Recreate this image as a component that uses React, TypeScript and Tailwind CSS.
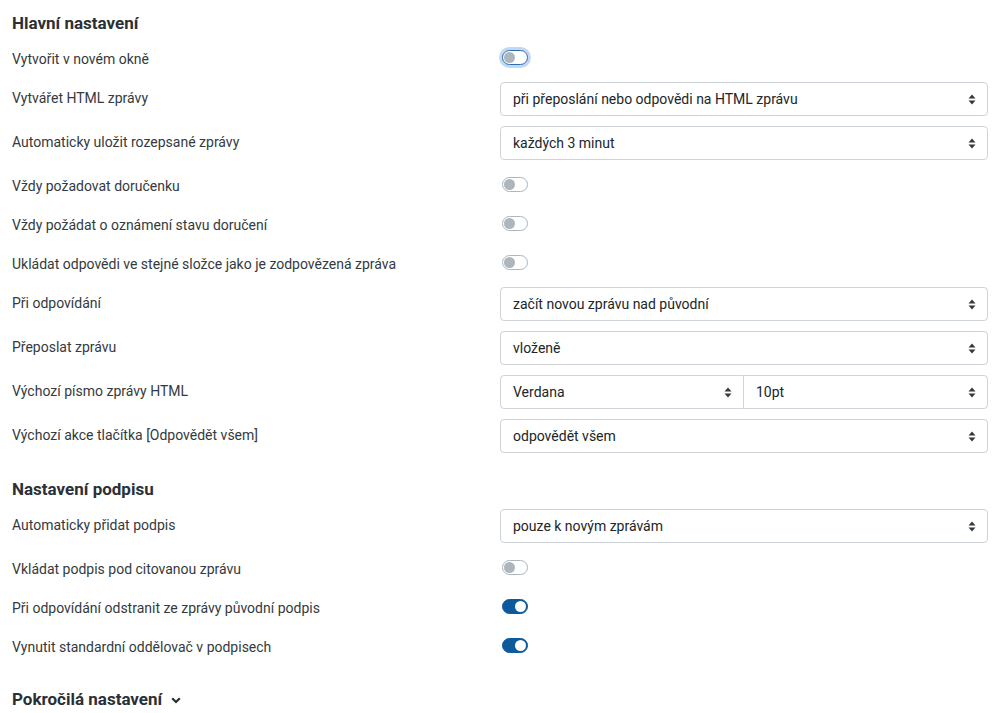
import React from "react";

const Arrows = () => (
  <svg width="8" height="11" viewBox="0 0 8 11" className="shrink-0">
    <path d="M4 0.5 L7.5 4.5 L0.5 4.5 Z" fill="#343a40" />
    <path d="M4 10.5 L7.5 6.5 L0.5 6.5 Z" fill="#343a40" />
  </svg>
);

const Select = ({ value, className = "" }: { value: string; className?: string }) => (
  <div
    className={
      "h-[34px] flex items-center justify-between pl-[12px] pr-[11px] border border-[#ced4da] bg-white text-[14px] text-[#212529] " +
      className
    }
  >
    <span>{value}</span>
    <Arrows />
  </div>
);

const Toggle = ({ on = false, focus = false }: { on?: boolean; focus?: boolean }) => {
  if (on)
    return (
      <div className="ml-[2px] w-[26px] h-[15px] rounded-full bg-[#0c5a9c] border border-[#0c5a9c] flex items-center justify-end pr-[1px]">
        <div className="w-[11px] h-[11px] rounded-full bg-white" />
      </div>
    );
  return (
    <div
      className={
        "ml-[2px] w-[26px] h-[15px] rounded-full bg-white border flex items-center pl-[1px] " +
        (focus ? "border-[#2a6fb0] shadow-[0_0_0_3px_#c3d8ee]" : "border-[#adb5bd]")
      }
    >
      <div className="w-[11px] h-[11px] rounded-full bg-[#adb5bd]" />
    </div>
  );
};

const Row = ({ label, children, tall = false }: { label: string; children: React.ReactNode; tall?: boolean }) => (
  <div className={"flex " + (tall ? "h-[44px]" : "h-[39px]")}>
    <div className="w-[488px] shrink-0 pt-[11px] leading-[21px] text-[14px] text-[#343a40]">{label}</div>
    <div className="flex-1 flex flex-col justify-center">{children}</div>
  </div>
);

const Header = ({ children, className = "" }: { children: React.ReactNode; className?: string }) => (
  <div
    className={
      "h-[24px] leading-[24px] text-[17px] font-bold text-[#2b3036] mb-[3px] flex items-center " + className
    }
  >
    {children}
  </div>
);

export default function App() {
  return (
    <div
      className="w-[994px] h-[713px] bg-white pl-[12px] pr-[6px] overflow-hidden"
      style={{ fontFamily: "Roboto, 'Noto Sans', sans-serif" }}
    >
      <Header className="mt-[11px]">Hlavní nastavení</Header>
      <Row label="Vytvořit v novém okně">
        <Toggle focus />
      </Row>
      <Row label="Vytvářet HTML zprávy" tall>
        <Select value="při přeposlání nebo odpovědi na HTML zprávu" className="rounded-[4px]" />
      </Row>
      <Row label="Automaticky uložit rozepsané zprávy" tall>
        <Select value="každých 3 minut" className="rounded-[4px]" />
      </Row>
      <Row label="Vždy požadovat doručenku">
        <Toggle />
      </Row>
      <Row label="Vždy požádat o oznámení stavu doručení">
        <Toggle />
      </Row>
      <Row label="Ukládat odpovědi ve stejné složce jako je zodpovězená zpráva">
        <Toggle />
      </Row>
      <Row label="Při odpovídání" tall>
        <Select value="začít novou zprávu nad původní" className="rounded-[4px]" />
      </Row>
      <Row label="Přeposlat zprávu" tall>
        <Select value="vloženě" className="rounded-[4px]" />
      </Row>
      <Row label="Výchozí písmo zprávy HTML" tall>
        <div className="flex">
          <Select value="Verdana" className="w-[244px] rounded-l-[4px]" />
          <Select value="10pt" className="flex-1 -ml-px rounded-r-[4px]" />
        </div>
      </Row>
      <Row label="Výchozí akce tlačítka [Odpovědět všem]" tall>
        <Select value="odpovědět všem" className="rounded-[4px]" />
      </Row>

      <Header className="mt-[19px]">Nastavení podpisu</Header>
      <Row label="Automaticky přidat podpis" tall>
        <Select value="pouze k novým zprávám" className="rounded-[4px]" />
      </Row>
      <Row label="Vkládat podpis pod citovanou zprávu">
        <Toggle />
      </Row>
      <Row label="Při odpovídání odstranit ze zprávy původní podpis">
        <Toggle on />
      </Row>
      <Row label="Vynutit standardní oddělovač v podpisech">
        <Toggle on />
      </Row>

      <Header className="mt-[22px]">
        Pokročilá nastavení
        <svg width="10" height="7" viewBox="0 0 10 7" className="ml-[9px] mt-[2px]">
          <path d="M1.2 1.2 L5 5 L8.8 1.2" stroke="#2b3036" strokeWidth="2.2" fill="none" />
        </svg>
      </Header>
    </div>
  );
}
